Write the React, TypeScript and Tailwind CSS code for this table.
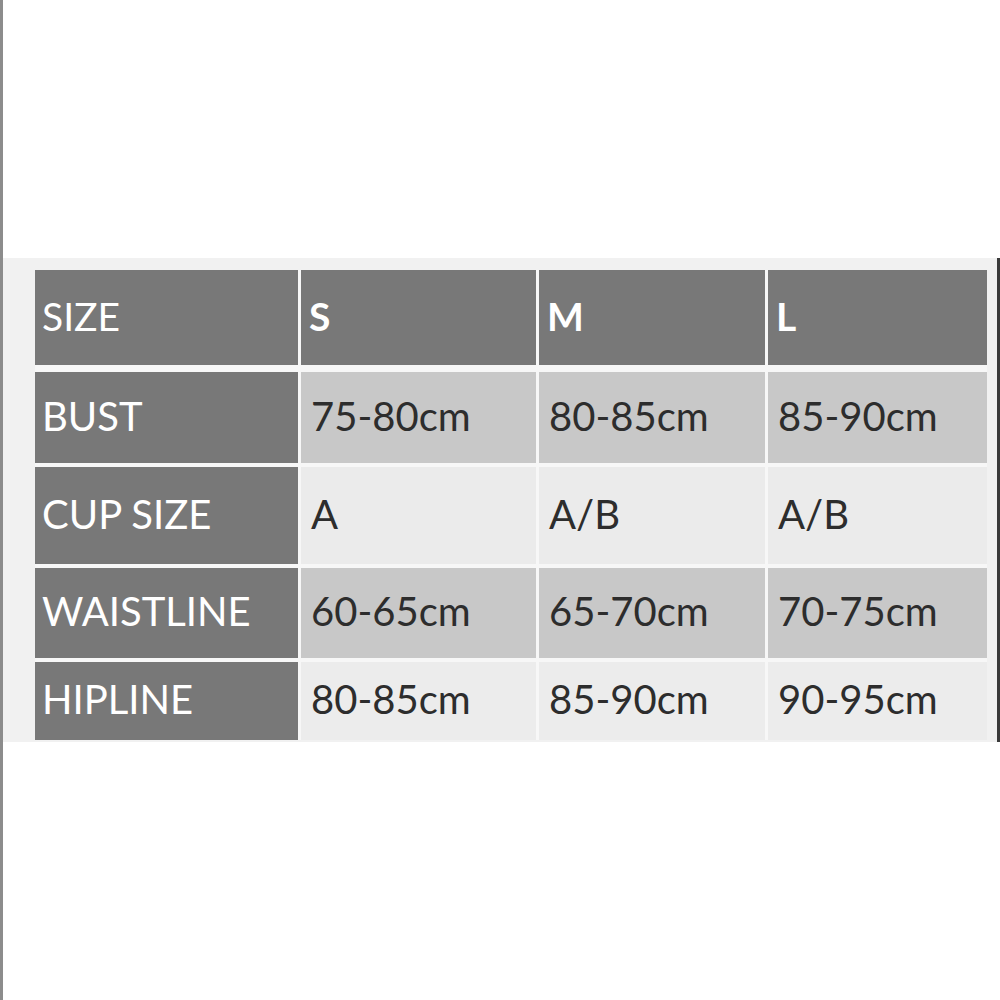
const cols = 'grid grid-cols-[263px_235px_226px_219px] gap-x-[3px]';

type Row = { label: string; values: string[]; h: string; shade: string };

const rows: Row[] = [
  { label: 'BUST', values: ['75-80cm', '80-85cm', '85-90cm'], h: 'h-[91px]', shade: 'bg-[#c8c8c8]' },
  { label: 'CUP SIZE', values: ['A', 'A/B', 'A/B'], h: 'h-[97px]', shade: 'bg-[#ebebeb]' },
  { label: 'WAISTLINE', values: ['60-65cm', '65-70cm', '70-75cm'], h: 'h-[90px]', shade: 'bg-[#c8c8c8]' },
  { label: 'HIPLINE', values: ['80-85cm', '85-90cm', '90-95cm'], h: 'h-[78px]', shade: 'bg-[#ececec]' },
];

export default function App() {
  return (
    <div
      className="w-[1000px] h-[1000px] bg-white border-l-[3px] border-[#8c8c8c] pt-[258px]"
      style={{ fontFamily: 'Lato, "Noto Sans", sans-serif' }}
    >
      <div className="h-[484px] bg-[#f1f1f1] border-r-[3px] border-[#3a3a3a] pl-[32px] pt-[12px]">
        <div className="w-[952px] bg-[#f7f7f7] flex flex-col gap-y-[4px]">
          {/* header */}
          <div className={`${cols} h-[95px] mb-[3px] text-white text-[39px]`}>
            <div className="bg-[#787878] flex items-center pl-[7px] pb-[3px]">SIZE</div>
            <div className="bg-[#787878] flex items-center pl-[8px] pb-[3px] font-bold">S</div>
            <div className="bg-[#787878] flex items-center pl-[8px] pb-[3px] font-bold">M</div>
            <div className="bg-[#787878] flex items-center pl-[8px] pb-[3px] font-bold">L</div>
          </div>
          {rows.map((r) => (
            <div key={r.label} className={`${cols} ${r.h} text-[40px]`}>
              <div className="bg-[#787878] text-white flex items-center pl-[7px] pb-[4px]">{r.label}</div>
              {r.values.map((v, i) => (
                <div key={i} className={`${r.shade} text-[#2d2d2d] flex items-center pl-[10px] pb-[4px]`}>
                  {v}
                </div>
              ))}
            </div>
          ))}
        </div>
      </div>
    </div>
  );
}
